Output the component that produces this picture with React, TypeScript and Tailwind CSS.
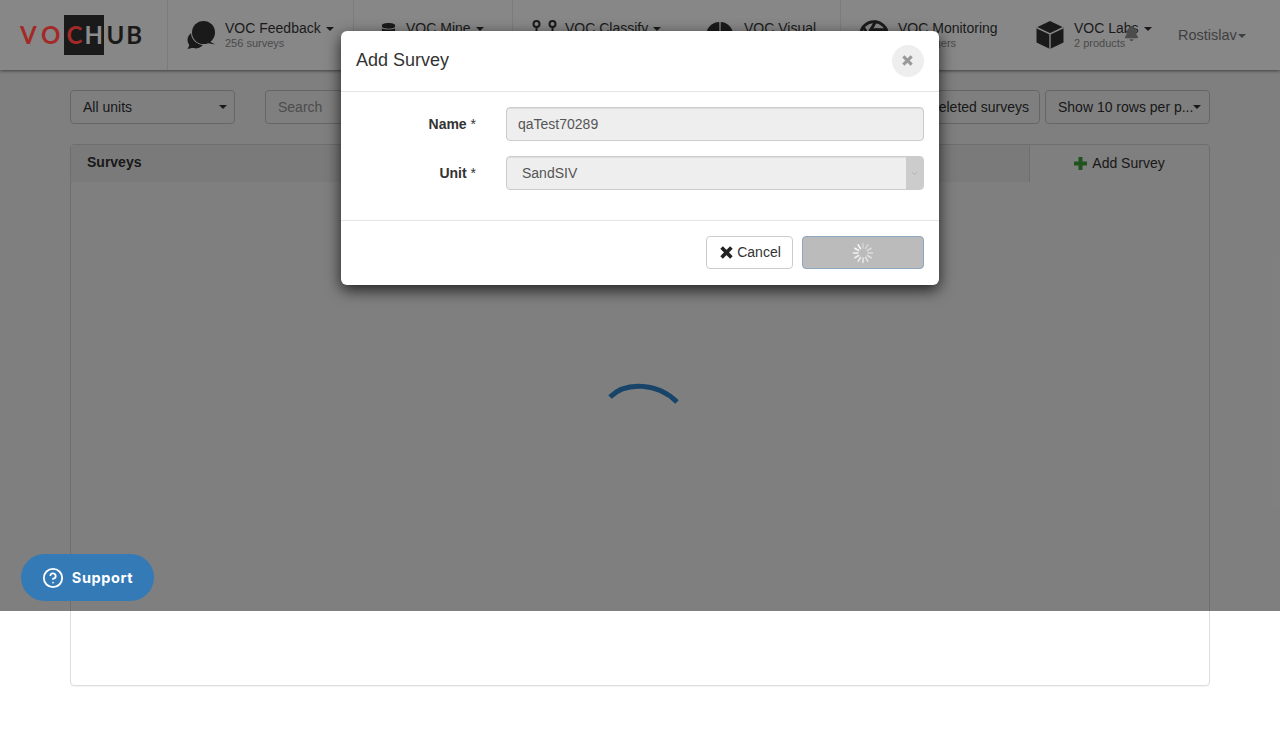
import React from 'react';
import { FaDatabase, FaBell } from 'react-icons/fa';
import { Aperture, CircleHelp, ChevronDown } from 'lucide-react';

const Caret = ({ className = 'ml-[5px] border-t-[#1a1a1a]' }: { className?: string }) => (
  <span className={`inline-block align-middle border-x-4 border-t-4 border-x-transparent ${className}`} />
);

const Pin = () => (
  <svg width="9" height="15" viewBox="0 0 9 15" fill="none" stroke="#1a1a1a" strokeWidth="2">
    <circle cx="4.5" cy="4" r="3" />
    <path d="M4.5 7v8" />
  </svg>
);

const Cross = ({ size, stroke }: { size: number; stroke: string }) => (
  <svg width={size} height={size} viewBox="0 0 13 13" fill="none" stroke={stroke} strokeWidth="3.6">
    <path d="M1.6 1.6L11.4 11.4M11.4 1.6L1.6 11.4" />
  </svg>
);

// two overlapping speech bubbles, big one on top
const BubblesIcon = () => (
  <svg width="28" height="28" viewBox="0 0 28 28">
    <circle cx="9" cy="19" r="8.5" fill="#1a1a1a" />
    <path d="M3 23L0.5 28L9 26Z" fill="#1a1a1a" />
    <circle cx="16.5" cy="11.5" r="12.5" fill="#878787" />
    <circle cx="16.5" cy="11.5" r="11.5" fill="#1a1a1a" />
    <path d="M22 20L28 23.5L20 22Z" fill="#1a1a1a" />
  </svg>
);

const PieIcon = () => (
  <svg width="28" height="28" viewBox="0 0 28 28" fill="#1a1a1a">
    <path d="M13.3 1A13 13 0 0 0 13.3 27Z" />
    <path d="M14.7 1A13 13 0 0 1 27 13.3H14.7Z" />
    <path d="M14.7 14.7H27A13 13 0 0 1 14.7 27Z" />
  </svg>
);

const CubeIcon = () => (
  <svg width="28" height="28" viewBox="0 0 28 28">
    <path d="M14 0L27.5 6.500V21.500L14 28L0.5 21.500V6.500Z" fill="#1a1a1a" />
    <path d="M0.5 6.500L14 13L27.5 6.500M14 13V28" fill="none" stroke="#878787" strokeWidth="1.4" />
  </svg>
);

interface NavItemProps {
  icon: React.ReactNode
  title: string
  sub?: string
  caret?: boolean
  width: string
  iconBox: string
  border?: boolean
}

const NavItem = ({ icon, title, sub, caret, width, iconBox, border }: NavItemProps) => (
  <div className={`flex items-center pl-[19px] ${width} ${border ? 'border-r border-[#7c7c7c]' : ''}`}>
    <div className={`flex justify-center ${iconBox}`}>{icon}</div>
    <div className="pb-[1px] leading-none">
      <div className="text-[14px] leading-[16px] text-[#1a1a1a] whitespace-nowrap">
        {title}
        {caret && <Caret />}
      </div>
      <div className="mt-[1px] h-[12px] text-[11px] leading-[12px] text-[#4a4a4a] whitespace-nowrap">{sub}</div>
    </div>
  </div>
);

const Spinner = () => (
  <svg width="22" height="22" viewBox="0 0 22 22" stroke="#fff" strokeWidth="1.5" strokeLinecap="round">
    {Array.from({ length: 12 }).map((_, i) => (
      <line key={i} x1="11" y1="1.5" x2="11" y2="6" opacity={0.35 + (i / 12) * 0.65} transform={`rotate(${i * 30} 11 11)`} />
    ))}
  </svg>
);

export default function App() {
  return (
    <div className="relative h-[755px] overflow-hidden bg-white font-['Liberation_Sans',Arial,sans-serif] text-[14px] text-[#333]">
      {/* Top navigation, already dimmed */}
      <nav className="relative z-20 flex h-[70px] bg-[#878787] shadow-[0_1px_3px_rgba(0,0,0,0.5)]">
        <div className="flex w-[168px] items-center border-r border-[#7c7c7c] pl-5">
          <div className="flex items-center font-['Lato',sans-serif] text-[24px] font-bold leading-none">
            <span className="tracking-[5px] text-[#a32a27]">VO</span>
            <span className="-ml-[2px] flex h-10 w-10 items-center bg-[#1a1a1a] pl-[3px]">
              <span className="text-[#a32a27]">C</span>
              <span className="ml-[2px] text-[#8c8c8c]">H</span>
            </span>
            <span className="ml-[3px] tracking-[2px] text-[#1a1a1a]">UB</span>
          </div>
        </div>
        <NavItem width="w-[186px]" border iconBox="w-[28px] mr-[10px]" title="VOC Feedback" sub="256 surveys" caret icon={<BubblesIcon />} />
        <NavItem width="w-[159px]" border iconBox="w-[30px] mr-[3px] mb-[10px]" title="VOC Mine" caret icon={<FaDatabase size={15} className="text-[#1a1a1a]" />} />
        <NavItem width="w-[174px]" iconBox="w-[25px] mr-[8px] gap-[7px] mb-[15px]" title="VOC Classify" caret icon={<><Pin /><Pin /></>} />
        <NavItem width="w-[154px]" border iconBox="w-[28px] mr-[10px]" title="VOC Visual" icon={<PieIcon />} />
        <NavItem width="w-[176px]" iconBox="w-[28px] mr-[10px]" title="VOC Monitoring" sub="125 triggers" icon={<Aperture size={32} strokeWidth={2.2} className="shrink-0 text-[#1a1a1a]" />} />
        <NavItem width="w-[161px]" iconBox="w-[28px] mr-[10px]" title="VOC Labs" sub="2 products" caret icon={<CubeIcon />} />
        <div className="flex items-center pt-[2px] text-[14.5px] text-[#3f3f3f]">
          Rostislav
          <Caret className="ml-[1px] border-t-[#3f3f3f]" />
        </div>
        <FaBell size={15} className="absolute left-[1124px] top-[26px] text-[#4c4c4c]" />
      </nav>

      {/* Page content */}
      <main className="px-[70px] pt-5">
        <div className="flex h-[34px] items-stretch">
          <div className="flex w-[165px] items-center justify-between rounded border border-[#ccc] pl-3 pr-[7px]">
            All units
            <Caret className="border-t-[#333]" />
          </div>
          <div className="ml-[30px] flex w-[300px] items-center rounded border border-[#ccc] px-3 text-[#999]">Search</div>
          <div className="ml-auto flex items-center rounded border border-[#ccc] pl-3 pr-[10px] whitespace-nowrap">Show deleted surveys</div>
          <div className="ml-[5px] flex w-[165px] items-center justify-between rounded border border-[#ccc] pl-3 pr-2 whitespace-nowrap">
            Show 10 rows per p...
            <Caret className="border-t-[#333]" />
          </div>
        </div>

        <section className="mt-5 h-[542px] rounded border border-[#ddd] shadow-[0_1px_1px_rgba(0,0,0,0.05)]">
          <div className="flex h-[37px]">
            <div className="flex flex-1 items-center border-r border-[#ddd] bg-[#f5f5f5] pb-[2px] pl-4 font-bold">Surveys</div>
            <div className="flex w-[179px] items-center justify-center gap-[5px]">
              <svg width="13" height="13" viewBox="0 0 13 13" fill="#3fa83f">
                <path d="M4.500 0h4v4.500H13v4H8.500V13h-4V8.500H0v-4h4.500Z" />
              </svg>
              Add Survey
            </div>
          </div>
        </section>
      </main>

      {/* Backdrop */}
      <div className="absolute inset-x-0 top-0 h-[611px] bg-black/50" />

      {/* Loading arc */}
      <svg className="absolute left-[600px] top-[376px]" width="90" height="36" viewBox="0 0 90 36" fill="none">
        <path d="M10 21 C 26 5, 58 7, 77 26" stroke="#174468" strokeWidth="5" />
      </svg>

      {/* Support button */}
      <div className="absolute left-[21px] top-[554px] flex h-[47px] w-[133px] items-center justify-center gap-2 rounded-full bg-[#337ab7] font-['Inter',sans-serif] text-[14.5px] font-bold tracking-[0.04em] text-white">
        <CircleHelp size={22} strokeWidth={2} />
        Support
      </div>

      {/* Modal */}
      <div className="absolute left-[341px] top-[31px] z-30 w-[598px] rounded-md bg-white shadow-[0_5px_15px_rgba(0,0,0,0.75)]">
        <div className="flex h-[61px] items-center justify-between border-b border-[#e5e5e5] px-[15px]">
          <h4 className="pb-[2px] text-[18px] text-[#333]">Add Survey</h4>
          <div className="mb-[1px] flex h-8 w-8 items-center justify-center rounded-full bg-[#eee] pb-[1px] pr-[1px]">
            <Cross size={11} stroke="#999" />
          </div>
        </div>
        <div className="border-b border-[#e5e5e5] px-[15px] pb-[30px] pt-[15px]">
          <div className="flex h-[34px] items-center">
            <label className="w-[120px] text-right font-bold">Name <span className="font-normal">*</span></label>
            <div className="ml-[30px] flex h-full flex-1 items-center rounded border border-[#ccc] bg-[#eee] pl-[11px] text-[#555] shadow-[inset_0_1px_1px_rgba(0,0,0,0.075)]">qaTest70289</div>
          </div>
          <div className="mt-[15px] flex h-[34px] items-center">
            <label className="w-[120px] text-right font-bold">Unit <span className="font-normal">*</span></label>
            <div className="ml-[30px] flex h-full flex-1 items-center justify-between overflow-hidden rounded border border-[#ccc] bg-[#eee] pl-[15px] text-[#555] shadow-[inset_0_1px_1px_rgba(0,0,0,0.075)]">
              SandSIV
              <span className="flex h-full w-[17px] items-center justify-center bg-[#ccc]">
                <ChevronDown size={9} className="text-[#aaa]" />
              </span>
            </div>
          </div>
        </div>
        <div className="flex justify-end gap-[9px] px-[15px] pb-[16px] pt-[15px]">
          <div className="flex h-[33px] w-[87px] items-center justify-center gap-1 rounded border border-[#ccc] bg-white pl-[2px] text-[#333]">
            <Cross size={13} stroke="#222" />
            Cancel
          </div>
          <div className="flex h-[33px] w-[122px] items-center justify-center rounded border border-[#8da8c0] bg-[#bbb]">
            <Spinner />
          </div>
        </div>
      </div>
    </div>
  );
}
